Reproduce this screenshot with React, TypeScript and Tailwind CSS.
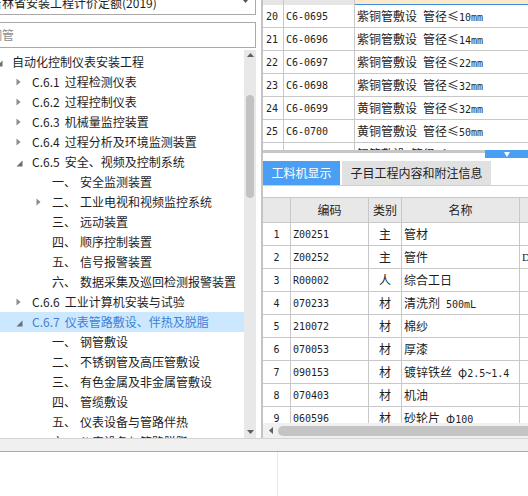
import React from "react";

type TreeNode = { level: 0 | 1 | 2; exp?: "open" | "closed"; label?: string; code?: string; text: string; sel?: boolean };

const tree: TreeNode[] = [
  { level: 0, exp: "open", text: "自动化控制仪表安装工程" },
  { level: 1, exp: "closed", code: "C.6.1", text: "过程检测仪表" },
  { level: 1, exp: "closed", code: "C.6.2", text: "过程控制仪表" },
  { level: 1, exp: "closed", code: "C.6.3", text: "机械量监控装置" },
  { level: 1, exp: "closed", code: "C.6.4", text: "过程分析及环境监测装置" },
  { level: 1, exp: "open", code: "C.6.5", text: "安全、视频及控制系统" },
  { level: 2, label: "一、", text: "安全监测装置" },
  { level: 2, exp: "closed", label: "二、", text: "工业电视和视频监控系统" },
  { level: 2, label: "三、", text: "远动装置" },
  { level: 2, label: "四、", text: "顺序控制装置" },
  { level: 2, label: "五、", text: "信号报警装置" },
  { level: 2, label: "六、", text: "数据采集及巡回检测报警装置" },
  { level: 1, exp: "closed", code: "C.6.6", text: "工业计算机安装与试验" },
  { level: 1, exp: "open", code: "C.6.7", text: "仪表管路敷设、伴热及脱脂", sel: true },
  { level: 2, label: "一、", text: "钢管敷设" },
  { level: 2, label: "二、", text: "不锈钢管及高压管敷设" },
  { level: 2, label: "三、", text: "有色金属及非金属管敷设" },
  { level: 2, label: "四、", text: "管缆敷设" },
  { level: 2, label: "五、", text: "仪表设备与管路伴热" },
  { level: 2, label: "六、", text: "仪表设备与管路脱脂" },
];

const levelPad = ["pl-[12px]", "pl-[32px]", "pl-[52px]"];

const topRows: [string, string, string][] = [
  ["20", "C6-0695", "紫铜管敷设 管径≤10mm"],
  ["21", "C6-0696", "紫铜管敷设 管径≤14mm"],
  ["22", "C6-0697", "紫铜管敷设 管径≤22mm"],
  ["23", "C6-0698", "紫铜管敷设 管径≤32mm"],
  ["24", "C6-0699", "黄铜管敷设 管径≤32mm"],
  ["25", "C6-0700", "黄铜管敷设 管径≤50mm"],
  ["26", "C6-0701", "铝管敷设 管径≤14mm"],
];

const bottomRows: [string, string, string, string, string][] = [
  ["1", "Z00251", "主", "管材", ""],
  ["2", "Z00252", "主", "管件", "DN15"],
  ["3", "R00002", "人", "综合工日", ""],
  ["4", "070233", "材", "清洗剂 500mL", ""],
  ["5", "210072", "材", "棉纱", ""],
  ["6", "070053", "材", "厚漆", ""],
  ["7", "090153", "材", "镀锌铁丝 φ2.5~1.4", ""],
  ["8", "070403", "材", "机油", ""],
  ["9", "060596", "材", "砂轮片 φ100", ""],
];

function Mixed({ text }: { text: string }) {
  const parts = text.match(/[\x20-\x7e]+|[^\x20-\x7e]+/g) ?? [];
  return (
    <>
      {parts.map((p, i) =>
        /^[\x20-\x7e]+$/.test(p) ? (
          <span key={i} className="whitespace-pre font-['DejaVu_Sans_Mono',monospace] text-[10px]">
            {p}
          </span>
        ) : (
          <span key={i} className="whitespace-pre">
            {p}
          </span>
        )
      )}
    </>
  );
}

function Expander({ kind }: { kind?: "open" | "closed" }) {
  return (
    <span className="w-[16px] shrink-0 flex items-center">
      {kind === "closed" && (
        <svg width="5" height="8" viewBox="0 0 5 8">
          <polygon points="0.5,0.5 4.5,4 0.5,7.5" fill="#8a8a8a" />
        </svg>
      )}
      {kind === "open" && (
        <svg width="7" height="7" viewBox="0 0 7 7" className="mt-[2px]">
          <polygon points="6.5,0.5 6.5,6.5 0.5,6.5" fill="#6e6e6e" />
        </svg>
      )}
    </span>
  );
}

function LeftPanel() {
  return (
    <div className="w-[256px] h-full flex flex-col overflow-hidden shrink-0">
      <div className="relative -mt-[9px] -ml-[14px] w-[270px] h-[24px] shrink-0 border border-[#a9a9a9] flex items-center pl-[3px] whitespace-nowrap overflow-hidden">
        <span>吉林省安装工程计价定额(2019)</span>
        <svg width="5" height="3" viewBox="0 0 5 3" className="absolute right-[7px] top-[8px]">
          <polygon points="0,0 5,0 2.5,3" fill="#555" />
        </svg>
      </div>
      <div className="mt-[7px] -ml-[14px] w-[270px] h-[26px] shrink-0 border border-[#a9a9a9] flex items-center pl-[3px] text-[#8c8c8c] whitespace-nowrap">
        铜管
      </div>
      <div className="mt-[2px] flex-1 flex min-h-0">
        <div className="w-[244px] h-full overflow-hidden">
          <div className="-ml-[16px] w-[260px] pt-[2px]">
            {tree.map((n, i) => (
              <div
                key={i}
                className={`flex items-center h-[20px] whitespace-nowrap ${levelPad[n.level]} ${
                  n.sel ? "bg-[#cce8ff] text-[#3f7fd6]" : ""
                }`}
              >
                <Expander kind={n.exp} />
                {n.label && <span className="w-[28px] shrink-0">{n.label}</span>}
                {n.code && <span className="mr-[5px]">{n.code}</span>}
                <span>{n.text}</span>
              </div>
            ))}
          </div>
        </div>
        <div className="w-[12px] h-full bg-[#e8e8e8] flex flex-col items-center">
          <svg width="7" height="4" viewBox="0 0 7 4" className="mt-[3px]">
            <polygon points="0,4 7,4 3.5,0" fill="#606060" />
          </svg>
          <div className="mt-[38px] w-[8px] h-[103px] rounded-full bg-[#c2c2c2]" />
          <div className="flex-1" />
          <svg width="7" height="4" viewBox="0 0 7 4" className="mb-[4px]">
            <polygon points="0,0 7,0 3.5,4" fill="#606060" />
          </svg>
        </div>
      </div>
    </div>
  );
}

function RightPanel() {
  return (
    <div className="flex-1 h-full pl-[5px] min-w-0">
      <div className="h-full border-l-2 border-[#c4c4c4] flex flex-col min-w-0 overflow-hidden">
        {/* top table */}
        <div className="h-[150px] shrink-0 overflow-hidden">
          <div className="flex h-[5px]">
            <div className="w-[21px] shrink-0 border-r border-[#c8c8c8] bg-[#e6e6e6]" />
            <div className="w-[71px] shrink-0 border-r border-[#c8c8c8] bg-[#e6e6e6]" />
            <div className="flex-1 bg-[#fde8c8] border-b border-[#3b8de6]" />
          </div>
          {topRows.map((r) => (
            <div key={r[0]} className="flex h-[23px] border-b border-[#c8c8c8] whitespace-nowrap">
              <div className="w-[21px] shrink-0 border-r border-[#c8c8c8] flex items-center pl-[3px] font-['DejaVu_Sans_Mono',monospace] text-[10px]">
                {r[0]}
              </div>
              <div className="w-[71px] shrink-0 border-r border-[#c8c8c8] flex items-center pl-[2px] font-['DejaVu_Sans_Mono',monospace] text-[10px]">
                {r[1]}
              </div>
              <div className="flex-1 flex items-center pl-[2px] text-[12px]">
                <span>
                  <Mixed text={r[2]} />
                </span>
              </div>
            </div>
          ))}
        </div>
        {/* splitter */}
        <div className="h-[11px] shrink-0 flex items-start">
          <div className="flex-1 h-[3px] bg-[#c6c6c6]" />
          <div className="w-[43px] h-[8px] bg-[#4a9ff5] flex items-center justify-center">
            <svg width="6" height="5" viewBox="0 0 6 5">
              <polygon points="0,0 6,0 3,5" fill="#ffffff" />
            </svg>
          </div>
        </div>
        {/* tabs */}
        <div className="h-[25px] shrink-0 flex gap-[2px] border-b border-[#d0d0d0]">
          <div className="w-[77px] h-[24px] bg-[#4a9ff5] text-white flex items-center justify-center whitespace-nowrap">
            工料机显示
          </div>
          <div className="w-[149px] h-[24px] bg-[#e1e1e1] text-[#222] flex items-center justify-center whitespace-nowrap">
            子目工程内容和附注信息
          </div>
        </div>
        <div className="h-[11px] shrink-0" />
        {/* bottom table */}
        <div className="flex-1 min-h-0 overflow-hidden">
          <div className="flex h-[26px] border-y border-[#c8c8c8] bg-[#e8e8e8] whitespace-nowrap">
            <div className="w-[28px] shrink-0 border-r border-[#c8c8c8]" />
            <div className="w-[78px] shrink-0 border-r border-[#c8c8c8] flex items-center justify-center">编码</div>
            <div className="w-[33px] shrink-0 border-r border-[#c8c8c8] flex items-center justify-center">类别</div>
            <div className="w-[118px] shrink-0 border-r border-[#c8c8c8] flex items-center justify-center">名称</div>
            <div className="flex-1" />
          </div>
          {bottomRows.map((r) => (
            <div key={r[0]} className="flex h-[23px] border-b border-[#c8c8c8] whitespace-nowrap">
              <div className="w-[28px] shrink-0 border-r border-[#c8c8c8] flex items-center justify-center font-['DejaVu_Sans_Mono',monospace] text-[10px]">
                {r[0]}
              </div>
              <div className="w-[78px] shrink-0 border-r border-[#c8c8c8] flex items-center pl-[2px] font-['DejaVu_Sans_Mono',monospace] text-[10px]">
                {r[1]}
              </div>
              <div className="w-[33px] shrink-0 border-r border-[#c8c8c8] flex items-center justify-center">{r[2]}</div>
              <div className="w-[118px] shrink-0 border-r border-[#c8c8c8] flex items-center pl-[2px] overflow-hidden">
                <span>
                  <Mixed text={r[3]} />
                </span>
              </div>
              <div className="flex-1 flex items-center pl-[2px] font-['Liberation_Serif',serif] text-[11px]">{r[4]}</div>
            </div>
          ))}
        </div>
        {/* horizontal scrollbar */}
        <div className="h-[15px] shrink-0 bg-[#f0f0f0] flex items-center">
          <div className="w-[15px] h-full flex items-center justify-center">
            <svg width="4" height="7" viewBox="0 0 4 7">
              <polygon points="4,0 4,7 0,3.5" fill="#606060" />
            </svg>
          </div>
          <div className="flex-1 h-[10px] rounded-l-full bg-[#c4c4c4]" />
        </div>
      </div>
    </div>
  );
}

export default function App() {
  return (
    <div className="w-[528px] h-[496px] bg-white overflow-hidden flex flex-col font-['Noto_Sans_CJK_SC',sans-serif] text-[12px] text-[#1e1e1e]">
      <div className="flex h-[438px] shrink-0">
        <LeftPanel />
        <RightPanel />
      </div>
      <div className="h-[14px] shrink-0 bg-[#f0f0f0] border-t border-[#d4d4d4] border-b border-b-[#a8a8a8]" />
      <div className="flex-1">
        <div className="ml-[277px] h-full border-l border-[#e8e8e8]" />
      </div>
    </div>
  );
}
